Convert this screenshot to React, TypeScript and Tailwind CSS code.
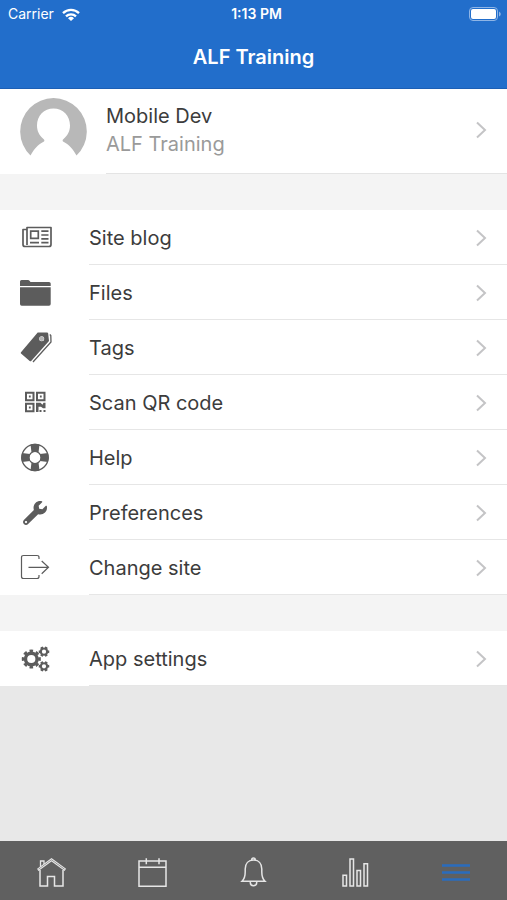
import type { ReactNode } from "react";
import { FaWrench } from "react-icons/fa";

interface MenuItem {
  id: string;
  label: string;
  icon: ReactNode;
}

interface IconProps {
  children: ReactNode;
}

// Solid / mixed glyphs used in the list rows
function RowIcon({ children }: IconProps) {
  return (
    <svg viewBox="0 0 36 36" className="h-9 w-9" fill="none" stroke="currentColor" aria-hidden="true">
      {children}
    </svg>
  );
}

// Thin outlined glyphs used in the bottom bar
function TabIcon({ children }: IconProps) {
  return (
    <svg viewBox="0 0 36 36" className="h-9 w-9" fill="none" stroke="currentColor" strokeWidth="1.5" aria-hidden="true">
      {children}
    </svg>
  );
}

function Gear({ cx, cy, r, width, teeth }: { cx: number; cy: number; r: number; width: number; teeth: number }) {
  return (
    <>
      <circle cx={cx} cy={cy} r={r} strokeWidth={width} />
      <circle
        cx={cx}
        cy={cy}
        r={r + width * 0.7}
        strokeWidth={width * 0.8}
        pathLength={teeth * 2}
        strokeDasharray="1.1 0.9"
        strokeDashoffset="0.55"
      />
    </>
  );
}

const siteItems: MenuItem[] = [
  {
    id: "blog",
    label: "Site blog",
    icon: (
      <RowIcon>
        <path d="M9 10.500H5v15a2 2 0 0 0 2 2h24a2 2 0 0 0 2-2V8.500H9V26" strokeWidth="1.700" strokeLinejoin="round" />
        <path d="M12.700 12.200h7.600v7.200h-7.600zM23.300 12.200h7.200M23.300 16h7.200M23.300 19.800h7.200M23.300 23.600h7.200M12 23.600h9" strokeWidth="1.700" />
      </RowIcon>
    ),
  },
  {
    id: "files",
    label: "Files",
    icon: (
      <RowIcon>
        <path
          d="M2 12V7.500Q2 6 3.500 6H10q1 0 1.500.8L12.500 8H31q1.700 0 1.700 1.500V12zM2 13.300h30.700V30q0 1.700-1.700 1.700H3.700Q2 31.700 2 30z"
          fill="currentColor"
          stroke="none"
        />
      </RowIcon>
    ),
  },
  {
    id: "tags",
    label: "Tags",
    icon: (
      <RowIcon>
        <path
          fillRule="evenodd"
          d="M19.700 3.500H29q1 0 1.200 1L31 12 13.200 32q-.7.7-1.500 0L3 24.500q-.6-.6 0-1.300zM23.700 7.200a2.500 2.500 0 1 0 0 5 2.500 2.500 0 0 0 0-5z"
          fill="currentColor"
          stroke="none"
        />
        <circle cx="23.700" cy="9.700" r="2.300" fill="#b5b5b5" stroke="none" />
        <path d="M31.800 5.500l1 1 .2 6.500L15 33" strokeWidth="1.300" />
      </RowIcon>
    ),
  },
  {
    id: "qr",
    label: "Scan QR code",
    icon: (
      <RowIcon>
        <path d="M8 8.700h7.500v7.500H8zM19 8.700h7.500v7.500H19zM8 19.700h7.500v7.500H8z" strokeWidth="2" />
        <path
          d="M10.900 11.600h1.800v1.800h-1.800zM21.900 11.600h1.800v1.800h-1.800zM10.900 22.600h1.800v1.800h-1.800zM18 18.800h4.500l2 2 1-2h2v5.500h-2.500l-2-1.500H20.500V28H18zM21.500 26h2v2h-2zM25.500 26h2v2h-2z"
          fill="currentColor"
          stroke="none"
        />
      </RowIcon>
    ),
  },
  {
    id: "help",
    label: "Help",
    icon: (
      <RowIcon>
        <circle cx="17" cy="18.500" r="13.200" strokeWidth="1.300" />
        <circle cx="17" cy="18.500" r="6" strokeWidth="1.200" />
        <path
          d="M12.500 5.500Q17 3.900 21.500 5.500L20.500 13.500q-3.500-1.500-7 0zM12.500 31.500q4.500 1.600 9 0L20.500 23.500q-3.500 1.500-7 0zM4 14q-1.600 4.500 0 9l8-1q-1.500-3.500 0-7zM30 14q1.600 4.500 0 9l-8-1q1.500-3.500 0-7z"
          fill="currentColor"
          stroke="none"
        />
      </RowIcon>
    ),
  },
  {
    id: "preferences",
    label: "Preferences",
    icon: (
      <span className="flex h-9 w-[34px] items-center justify-center pt-0.5">
        <FaWrench className="h-6 w-6" aria-hidden="true" />
      </span>
    ),
  },
  {
    id: "change-site",
    label: "Change site",
    icon: (
      <RowIcon>
        <path
          d="M21 10V8.500Q21 6.500 19 6.500H5.500Q3.500 6.500 3.500 8.500v19q0 2 2 2H19q2 0 2-2V26M10.500 18.300h20M23.700 12l6.800 6.300-6.800 6.500"
          strokeWidth="1.200"
        />
      </RowIcon>
    ),
  },
];

const appItems: MenuItem[] = [
  {
    id: "app-settings",
    label: "App settings",
    icon: (
      <RowIcon>
        <Gear cx={13.3} cy={19} r={5.8} width={3.4} teeth={8} />
        <Gear cx={26} cy={11.7} r={3.1} width={2} teeth={6} />
        <Gear cx={26} cy={26.3} r={3.1} width={2} teeth={6} />
      </RowIcon>
    ),
  },
];

const tabs: MenuItem[] = [
  {
    id: "home",
    label: "Home",
    icon: (
      <TabIcon>
        <path d="M7 15v16h7.500V21.500h7V31H30V15" />
        <path d="M5.500 15.200L18.500 5.800l13 9.400.8-1.300L18.500 3.800l-13.700 10z" strokeWidth="1.100" />
        <path d="M7.500 12V6h3.500v3" strokeWidth="1.300" />
      </TabIcon>
    ),
  },
  {
    id: "calendar",
    label: "Calendar",
    icon: (
      <TabIcon>
        <path d="M5 6h27v25.300H5zM5 12.300h27M12.300 3.300v6M25 3.300v6" />
      </TabIcon>
    ),
  },
  {
    id: "notifications",
    label: "Notifications",
    icon: (
      <TabIcon>
        <path d="M7 26.300c2.500-2.500 3.200-4.500 3.200-9.300v-3C10.200 8.500 13.500 5 18.500 5s8.300 3.500 8.300 9v3c0 4.800.7 6.800 3.200 9.300zM16.700 4.800a1.800 1.800 0 0 1 3.600 0M15.300 26.500v1a3.200 3.200 0 0 0 6.400 0v-1" />
      </TabIcon>
    ),
  },
  {
    id: "reports",
    label: "Reports",
    icon: (
      <TabIcon>
        <path d="M6 20.300h3.500V31H6zM13 4h3.500v27H13zM20 15.500h3.500V31H20zM27 8.700h3.500V31H27z" />
      </TabIcon>
    ),
  },
  {
    id: "more",
    label: "More",
    icon: (
      <TabIcon>
        <path d="M4 10.500h28M4 17.500h28M4 24.500h28" strokeWidth="2.600" />
      </TabIcon>
    ),
  },
];

function Chevron() {
  return (
    <svg viewBox="0 0 12 18" className="mr-5 h-[18px] w-3 shrink-0 text-[#c4c4c6]" fill="none" stroke="currentColor" strokeWidth="2" aria-hidden="true">
      <path d="M2 1.500L10 9l-8 7.500" />
    </svg>
  );
}

function Avatar() {
  return (
    <svg viewBox="0 0 67 58" className="h-[58px] w-[67px]" aria-hidden="true">
      <path
        fillRule="evenodd"
        fill="#b8b8b8"
        d="M10.500 57.500A33.300 33.300 0 1 1 56.500 57.500C53 51 49 46.500 43 43.500Q42 42.500 43.500 41C48 37 50 33 50 27.500C50 17.500 43 10.500 33.500 10.500S17 17.500 17 27.500C17 33 19 37 23.500 41Q25 42.500 24 43.500C18 46.500 14 51 10.500 57.500z"
      />
    </svg>
  );
}

function MenuList({ items }: { items: MenuItem[] }) {
  return (
    <ul className="bg-white">
      {items.map((item) => (
        <li key={item.id}>
          <a href={`#${item.id}`} className="flex h-[55px]">
            <span className="w-[89px] shrink-0 pl-[18px] pt-[9px] text-[#5c5c5c]">{item.icon}</span>
            <span className="flex flex-1 items-center justify-between border-b border-[#e6e6e6] pt-0.5">
              <span className="text-xl text-[#3c3c3c]">{item.label}</span>
              <Chevron />
            </span>
          </a>
        </li>
      ))}
    </ul>
  );
}

export default function App() {
  return (
    <div className="flex min-h-screen flex-col bg-[#e8e8e8] font-['Inter','Liberation_Sans',sans-serif]">
      <header className="border-b border-[#1c5fb5] bg-[#226ecb] text-white">
        {/* Status bar */}
        <div className="grid h-7 grid-cols-3 items-center pl-2 pr-1.5 text-sm">
          <div className="flex items-center gap-2">
            <span>Carrier</span>
            <svg viewBox="0 0 18 13" className="h-[13px] w-[18px]" fill="none" stroke="currentColor" strokeWidth="2.300" aria-hidden="true">
              <path d="M1 5.200a11.500 11.500 0 0 1 16 0M4 8.300a7.200 7.200 0 0 1 10 0" />
              <path d="M6 10.300a4.300 4.300 0 0 1 6 0L9 13z" fill="currentColor" stroke="none" />
            </svg>
          </div>
          <span className="pl-1 text-center font-semibold">1:13 PM</span>
          <svg viewBox="0 0 32 14" className="h-[14px] w-8 justify-self-end" aria-hidden="true">
            <rect x="0.500" y="0.500" width="28" height="13" rx="3.500" fill="none" stroke="#8fb5e6" />
            <rect x="2" y="2" width="25" height="10" rx="2" fill="#fff" />
            <path d="M30 4.500q1.800 1 1.800 2.500T30 9.500z" fill="#8fb5e6" />
          </svg>
        </div>
        <h1 className="flex h-[60px] items-center justify-center pb-0.5 text-xl font-semibold">ALF Training</h1>
      </header>

      <main className="flex-1">
        <a href="#profile" className="flex h-[85px] bg-white">
          <span className="w-[106px] shrink-0 pl-5 pt-[9px]">
            <Avatar />
          </span>
          <span className="flex flex-1 items-center justify-between border-b border-[#e4e4e4] pb-0.5">
            <span className="flex flex-col text-xl leading-7">
              <span className="text-[#3c3c3c]">Mobile Dev</span>
              <span className="text-[#9a9a9a]">ALF Training</span>
            </span>
            <Chevron />
          </span>
        </a>
        <div className="h-9 bg-[#f4f4f4]" />
        <MenuList items={siteItems} />
        <div className="h-9 bg-[#f4f4f4]" />
        <MenuList items={appItems} />
      </main>

      <nav className="grid h-[59px] grid-cols-5 bg-[#606060] pt-1">
        {tabs.map((tab) => (
          <button
            key={tab.id}
            type="button"
            aria-label={tab.label}
            className={`flex items-center justify-center ${tab.id === "more" ? "text-[#2a6cbd]" : "text-[#e6e6e6]"}`}
          >
            {tab.icon}
          </button>
        ))}
      </nav>
    </div>
  );
}
